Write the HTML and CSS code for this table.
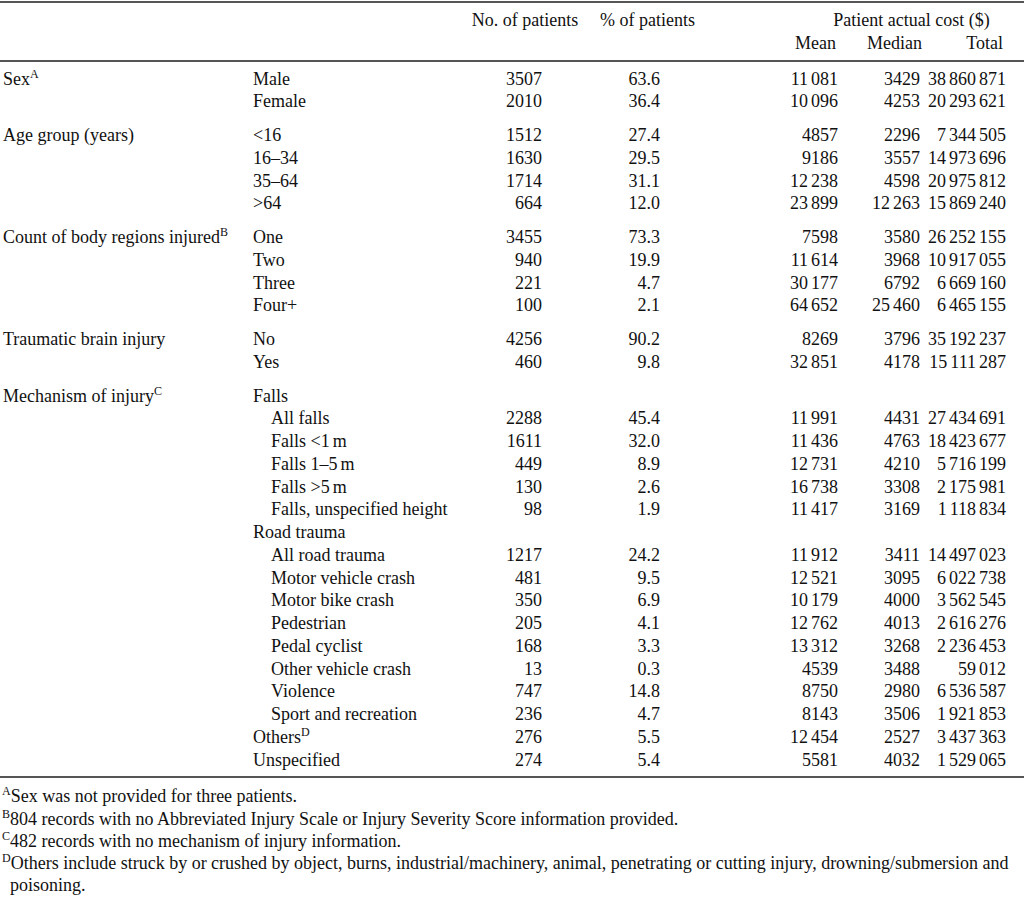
FILE: index.html
```html
<!DOCTYPE html>
<html lang="en">
<head>
<meta charset="utf-8">
<title>Patient actual cost</title>
<link rel="stylesheet" href="styles.css">
</head>
<body>
<table class="cost">
  <colgroup>
    <col class="c-cat"><col class="c-sub"><col class="c-n"><col class="c-pct"><col class="c-gap"><col class="c-mean"><col class="c-med"><col class="c-tot">
  </colgroup>
  <thead>
    <tr class="h1">
      <th></th><th></th>
      <th class="hc">No. of patients</th>
      <th class="hc">% of patients</th>
      <th></th>
      <th colspan="3" class="hc span">Patient actual cost ($)</th>
    </tr>
    <tr class="h2">
      <th></th><th></th><th></th><th></th><th></th>
      <th class="hm">Mean</th><th class="hd">Median</th><th class="ht">Total</th>
    </tr>
  </thead>
  <tbody>
    <tr class="first"><td>Sex<sup>A</sup></td><td>Male</td><td class="n">3507</td><td class="p">63.6</td><td></td><td class="m">11&#8198;081</td><td class="d">3429</td><td class="t">38&#8198;860&#8198;871</td></tr>
    <tr><td></td><td>Female</td><td class="n">2010</td><td class="p">36.4</td><td></td><td class="m">10&#8198;096</td><td class="d">4253</td><td class="t">20&#8198;293&#8198;621</td></tr>

    <tr class="grp"><td>Age group (years)</td><td>&lt;16</td><td class="n">1512</td><td class="p">27.4</td><td></td><td class="m">4857</td><td class="d">2296</td><td class="t">7&#8198;344&#8198;505</td></tr>
    <tr><td></td><td>16–34</td><td class="n">1630</td><td class="p">29.5</td><td></td><td class="m">9186</td><td class="d">3557</td><td class="t">14&#8198;973&#8198;696</td></tr>
    <tr><td></td><td>35–64</td><td class="n">1714</td><td class="p">31.1</td><td></td><td class="m">12&#8198;238</td><td class="d">4598</td><td class="t">20&#8198;975&#8198;812</td></tr>
    <tr><td></td><td>&gt;64</td><td class="n">664</td><td class="p">12.0</td><td></td><td class="m">23&#8198;899</td><td class="d">12&#8198;263</td><td class="t">15&#8198;869&#8198;240</td></tr>

    <tr class="grp"><td>Count of body regions injured<sup>B</sup></td><td>One</td><td class="n">3455</td><td class="p">73.3</td><td></td><td class="m">7598</td><td class="d">3580</td><td class="t">26&#8198;252&#8198;155</td></tr>
    <tr><td></td><td>Two</td><td class="n">940</td><td class="p">19.9</td><td></td><td class="m">11&#8198;614</td><td class="d">3968</td><td class="t">10&#8198;917&#8198;055</td></tr>
    <tr><td></td><td>Three</td><td class="n">221</td><td class="p">4.7</td><td></td><td class="m">30&#8198;177</td><td class="d">6792</td><td class="t">6&#8198;669&#8198;160</td></tr>
    <tr><td></td><td>Four+</td><td class="n">100</td><td class="p">2.1</td><td></td><td class="m">64&#8198;652</td><td class="d">25&#8198;460</td><td class="t">6&#8198;465&#8198;155</td></tr>

    <tr class="grp"><td>Traumatic brain injury</td><td>No</td><td class="n">4256</td><td class="p">90.2</td><td></td><td class="m">8269</td><td class="d">3796</td><td class="t">35&#8198;192&#8198;237</td></tr>
    <tr><td></td><td>Yes</td><td class="n">460</td><td class="p">9.8</td><td></td><td class="m">32&#8198;851</td><td class="d">4178</td><td class="t">15&#8198;111&#8198;287</td></tr>

    <tr class="grp"><td>Mechanism of injury<sup>C</sup></td><td>Falls</td><td></td><td></td><td></td><td></td><td></td><td></td></tr>
    <tr><td></td><td class="ind">All falls</td><td class="n">2288</td><td class="p">45.4</td><td></td><td class="m">11&#8198;991</td><td class="d">4431</td><td class="t">27&#8198;434&#8198;691</td></tr>
    <tr><td></td><td class="ind">Falls &lt;1&#8198;m</td><td class="n">1611</td><td class="p">32.0</td><td></td><td class="m">11&#8198;436</td><td class="d">4763</td><td class="t">18&#8198;423&#8198;677</td></tr>
    <tr><td></td><td class="ind">Falls 1–5&#8198;m</td><td class="n">449</td><td class="p">8.9</td><td></td><td class="m">12&#8198;731</td><td class="d">4210</td><td class="t">5&#8198;716&#8198;199</td></tr>
    <tr><td></td><td class="ind">Falls &gt;5&#8198;m</td><td class="n">130</td><td class="p">2.6</td><td></td><td class="m">16&#8198;738</td><td class="d">3308</td><td class="t">2&#8198;175&#8198;981</td></tr>
    <tr><td></td><td class="ind">Falls, unspecified height</td><td class="n">98</td><td class="p">1.9</td><td></td><td class="m">11&#8198;417</td><td class="d">3169</td><td class="t">1&#8198;118&#8198;834</td></tr>
    <tr><td></td><td>Road trauma</td><td></td><td></td><td></td><td></td><td></td><td></td></tr>
    <tr><td></td><td class="ind">All road trauma</td><td class="n">1217</td><td class="p">24.2</td><td></td><td class="m">11&#8198;912</td><td class="d">3411</td><td class="t">14&#8198;497&#8198;023</td></tr>
    <tr><td></td><td class="ind">Motor vehicle crash</td><td class="n">481</td><td class="p">9.5</td><td></td><td class="m">12&#8198;521</td><td class="d">3095</td><td class="t">6&#8198;022&#8198;738</td></tr>
    <tr><td></td><td class="ind">Motor bike crash</td><td class="n">350</td><td class="p">6.9</td><td></td><td class="m">10&#8198;179</td><td class="d">4000</td><td class="t">3&#8198;562&#8198;545</td></tr>
    <tr><td></td><td class="ind">Pedestrian</td><td class="n">205</td><td class="p">4.1</td><td></td><td class="m">12&#8198;762</td><td class="d">4013</td><td class="t">2&#8198;616&#8198;276</td></tr>
    <tr><td></td><td class="ind">Pedal cyclist</td><td class="n">168</td><td class="p">3.3</td><td></td><td class="m">13&#8198;312</td><td class="d">3268</td><td class="t">2&#8198;236&#8198;453</td></tr>
    <tr><td></td><td class="ind">Other vehicle crash</td><td class="n">13</td><td class="p">0.3</td><td></td><td class="m">4539</td><td class="d">3488</td><td class="t">59&#8198;012</td></tr>
    <tr><td></td><td class="ind">Violence</td><td class="n">747</td><td class="p">14.8</td><td></td><td class="m">8750</td><td class="d">2980</td><td class="t">6&#8198;536&#8198;587</td></tr>
    <tr><td></td><td class="ind">Sport and recreation</td><td class="n">236</td><td class="p">4.7</td><td></td><td class="m">8143</td><td class="d">3506</td><td class="t">1&#8198;921&#8198;853</td></tr>
    <tr><td></td><td>Others<sup>D</sup></td><td class="n">276</td><td class="p">5.5</td><td></td><td class="m">12&#8198;454</td><td class="d">2527</td><td class="t">3&#8198;437&#8198;363</td></tr>
    <tr class="last"><td></td><td>Unspecified</td><td class="n">274</td><td class="p">5.4</td><td></td><td class="m">5581</td><td class="d">4032</td><td class="t">1&#8198;529&#8198;065</td></tr>
  </tbody>
</table>
<div class="notes">
  <p class="note"><sup>A</sup>Sex was not provided for three patients.</p>
  <p class="note"><sup>B</sup>804 records with no Abbreviated Injury Scale or Injury Severity Score information provided.</p>
  <p class="note"><sup>C</sup>482 records with no mechanism of injury information.</p>
  <p class="note"><sup>D</sup>Others include struck by or crushed by object, burns, industrial/machinery, animal, penetrating or cutting injury, drowning/submersion and poisoning.</p>
</div>
</body>
</html>
```

FILE: styles.css
```css
html, body {
  margin: 0;
  padding: 0;
  background: #fff;
}
body {
  font-family: "Liberation Serif", "Times New Roman", serif;
  font-size: 18px;
  color: #111;
}
.cost {
  width: 1024px;
  margin-top: 1px;
  border-collapse: collapse;
  table-layout: fixed;
  line-height: 22.75px;
}
.c-cat { width: 253px; }
.c-sub { width: 212px; }
.c-n { width: 120px; }
.c-pct { width: 125px; }
.c-gap { width: 30px; }
.c-mean { width: 105px; }
.c-med { width: 82px; }
.c-tot { width: 97px; }

.cost th, .cost td {
  padding: 0;
  font-weight: normal;
  white-space: nowrap;
  vertical-align: top;
}
.cost thead tr.h1 th {
  border-top: 2px solid #555;
  padding-top: 6px;
}
.cost thead tr.h2 th {
  border-bottom: 2px solid #555;
  padding-bottom: 5px;
}
.hc { text-align: center; }
.span { padding-left: 59px !important; }
.hm { text-align: right; padding-right: 9px !important; }
.hd { text-align: right; padding-right: 5px !important; }
.ht { text-align: right; padding-right: 21px !important; }

.cost td:first-child { padding-left: 3px; }
.cost td.ind { padding-left: 18px; }
.cost tbody tr.first td { padding-top: 6px; }
.cost tbody tr.grp td { padding-top: 11px; }
.cost tbody tr.last td {
  padding-bottom: 5px;
  border-bottom: 2px solid #555;
}
.n { text-align: right; padding-right: 43px !important; }
.p { text-align: right; padding-right: 50px !important; }
.m { text-align: right; padding-right: 7px !important; }
.d { text-align: right; padding-right: 7px !important; }
.t { text-align: right; padding-right: 18px !important; }

sup {
  font-size: 12px;
  line-height: 0;
  vertical-align: baseline;
  position: relative;
  top: -7px;
}
.notes {
  margin-top: 7px;
  line-height: 22.25px;
}
.note {
  margin: 0;
  padding-left: 10px;
  padding-right: 8px;
  text-indent: -8px;
}
```
